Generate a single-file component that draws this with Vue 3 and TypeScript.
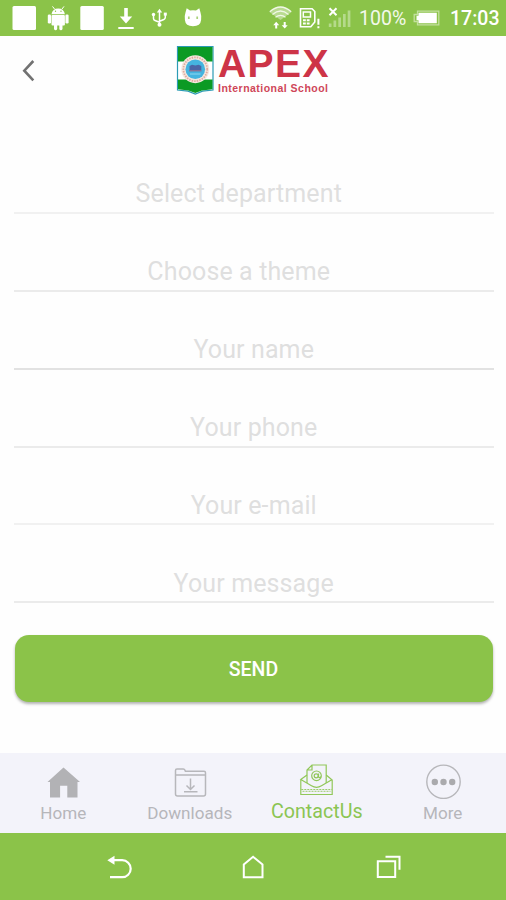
<script setup lang="ts">
interface Field {
  label: string
  kind: 'select' | 'input'
  tone: string
}

const fields: Field[] = [
  { label: 'Select department', kind: 'select', tone: 'soft' },
  { label: 'Choose a theme', kind: 'select', tone: 'mid' },
  { label: 'Your name', kind: 'input', tone: 'strong' },
  { label: 'Your phone', kind: 'input', tone: 'mid' },
  { label: 'Your e-mail', kind: 'input', tone: 'soft' },
  { label: 'Your message', kind: 'input', tone: 'mid' },
]

const tabs = [
  { id: 'home', label: 'Home' },
  { id: 'downloads', label: 'Downloads' },
  { id: 'contact', label: 'ContactUs' },
  { id: 'more', label: 'More' },
]
const activeTab = 'contact'
</script>

<template>
  <div class="screen">
    <header class="status">
      <svg class="status-left" width="210" height="36" viewBox="0 0 210 36" fill="#fff">
        <rect x="12.5" y="6" width="23.5" height="24" rx="1.5" />
        <g>
          <path d="M51.5 14.2a6.8 6.8 0 0 1 13.400 0z" />
          <path d="M54.500 9l-2-2.600M62 9l2-2.600" stroke="#fff" stroke-width="1" />
          <rect x="51.500" y="15" width="13.400" height="10.500" rx="1" />
          <rect x="47.800" y="14.500" width="3.200" height="9" rx="1.300" />
          <rect x="65.400" y="14.500" width="3.200" height="9" rx="1.300" />
          <rect x="54" y="24" width="3.200" height="6.200" rx="1.400" />
          <rect x="59.300" y="24" width="3.200" height="6.200" rx="1.400" />
          <circle cx="55.500" cy="11.200" r=".7" fill="#8bc349" />
          <circle cx="61" cy="11.200" r=".7" fill="#8bc349" />
        </g>
        <rect x="80.300" y="6" width="23.500" height="24" rx="1.500" />
        <path d="M124.200 8h3.600v8.500h4.400L126 23.600l-6.200-7.100h4.400zM118.300 27h15.400v2.100h-15.400z" />
        <path d="M159.500 11v13M153.500 15v3.500q0 1.500 1.500 2l4.500 1.800M165.300 14.500v2.800q0 1.500-1.500 2.200l-4.300 1.800" fill="none" stroke="#fff" stroke-width="1.500" />
        <path d="M156.800 12.500l2.700-3.700 2.700 3.700z" />
        <circle cx="153.500" cy="14.500" r="1.700" />
        <rect x="163.800" y="12.600" width="3" height="3" />
        <circle cx="159.500" cy="24.800" r="2" />
        <path d="M185.500 12.500l1.200-4.200 3.300 2.300q3-.7 6 0l3.300-2.300 1.200 4.200q1 2.500.6 7.500-.6 6.200-8.100 6.200t-8.100-6.200q-.4-5 .6-7.500z" />
        <path d="M188.800 16.500v2.500M197.200 16.500v2.500" stroke="#a9d178" stroke-width="1.700" />
      </svg>
      <div class="status-right">
        <svg width="88" height="36" viewBox="268 0 88 36">
          <path d="M269.500 12q11-10.500 22 0L280.500 20z" fill="#fff" opacity=".4" />
          <path d="M269.800 11.800q10.700-9.500 21.400 0M272.500 14.500q8-7 16 0M275.500 17.300q5-4 10 0" fill="none" stroke="#f1f8e7" stroke-width="1.300" />
          <path d="M276.200 21.800l3 3.400h-2v3.200H275.200v-3.200h-2zM284.700 28.600l-3-3.400h2V22h2v3.200h2z" fill="#fff" />
          <path d="M300.500 8.700h11.600l2.700 2.800v10.500l-4 4.800h-10.300z" fill="none" stroke="#fff" stroke-width="1.600" />
          <path d="M303.300 12h7.200v5h-7.200z" fill="none" stroke="#fff" stroke-width="1.500" />
          <path d="M303 20.300h7M303 23.500h7" stroke="#fff" stroke-width="2" stroke-dasharray="2.800 1" />
          <path d="M317.400 18.800h2v6h-2zM317.400 26.200h2v2h-2z" fill="#fff" />
          <path d="M329.500 8.200l7 7M336.500 8.200l-7 7" stroke="#fff" stroke-width="2" />
          <g fill="#b5da8b">
            <rect x="328.800" y="23.500" width="2.700" height="3.500" />
            <rect x="333.500" y="20.500" width="2.700" height="6.500" />
            <rect x="338.300" y="17.500" width="2.700" height="9.500" />
            <rect x="343" y="14" width="2.700" height="13" />
            <rect x="347.700" y="10.500" width="2.700" height="16.500" />
          </g>
        </svg>
        <span class="percent">100%</span>
        <svg class="battery" width="28" height="36" viewBox="412 0 28 36">
          <path d="M417.500 11.200h21.300v13.600h-21.300v-3.300h-3.300v-7h3.300z" fill="none" stroke="#c3e09f" stroke-width="1.300" />
          <path d="M418.500 12.700h18.300v10.600h-18.300v-3h-2v-4.600h2z" fill="#fff" />
        </svg>
        <span class="clock">17:03</span>
      </div>
    </header>

    <div class="header">
      <svg class="back" width="16" height="26" viewBox="0 0 16 26">
        <path d="M13.300 3L4.300 12.700l9 9.700" fill="none" stroke="#727272" stroke-width="2.600" />
      </svg>
      <svg class="logo" width="156" height="62" viewBox="175 36 156 62">
        <path d="M177.500 46.500h35.500v43.500l-10.500 1.200-7.200 2.800-7.300-2.800-10.500-1.200z" fill="#fff" stroke="#2b9bb5" stroke-width="1.200" />
        <path d="M178 47h34.500v14.500h-34.500z" fill="#0b9a24" />
        <path d="M178 79.500h34.500v9.800l-10.500 1.200-6.700 2.500-6.800-2.500-10.500-1.200z" fill="#0b9a24" />
        <circle cx="195.300" cy="69.200" r="14" fill="#f4e8df" />
        <circle cx="195.300" cy="69.200" r="11.900" fill="none" stroke="#e0aaa0" stroke-width="1.800" stroke-dasharray="1.500 1.100" />
        <circle cx="195.300" cy="69.200" r="9.800" fill="#45b4df" />
        <path d="M189.500 66l2.500-1.200 3.300.8 3.300-.8 2.700 1.200v4h-11.800z" fill="#4b65a5" />
        <path d="M189 70.800h12.500" stroke="#a55577" stroke-width="1" />
        <path d="M190 74h10.500" stroke="#7ed0ec" stroke-width="1.300" />
        <text x="218" y="76.500" textLength="110.500" class="brand">APEX</text>
        <text x="218" y="92" textLength="110" class="brand-sub">International School</text>
      </svg>
    </div>

    <main class="form">
      <div v-for="field in fields" :key="field.label" class="field" :class="[field.kind, field.tone]">
        <span class="placeholder">{{ field.label }}</span>
      </div>
      <button class="send" type="button">SEND</button>
    </main>

    <nav class="tabs">
      <div v-for="tab in tabs" :key="tab.id" class="tab" :class="{ active: tab.id === activeTab }">
        <svg v-if="tab.id === 'home'" width="36" height="36" viewBox="0 0 36 36">
          <path d="M18.500 4.500L35 19h-2.500v15.500H22.300V22.800h-7.200v11.700H5V19H2.500z" fill="#b2b2b5" />
        </svg>
        <svg v-else-if="tab.id === 'downloads'" width="36" height="36" viewBox="0 0 36 36" fill="none" stroke="#b7b7bb" stroke-width="1.500">
          <path d="M3.500 31V7.500Q3.500 6 5 6h6.300q1.200 0 1.700 1.200l.4 1H32Q33.500 8.200 33.500 9.700V31q0 2-2 2H5.500q-2 0-2-2zM3.500 12h30" />
          <path d="M18.500 15.500v11M14.500 22.500l4 4 4-4M12 28.700h13.500" />
        </svg>
        <svg v-else-if="tab.id === 'contact'" width="36" height="36" viewBox="0 0 36 36" fill="none" stroke="#91c759" stroke-width="1.200">
          <path d="M2.800 18v14.500h31.400V18L28.200 13M9 13L2.800 17.500 13.500 23.800q5 3 10 0l10.700-6.300" />
          <path d="M9 21V8l5-5h14.200v18M9 8h5V3" />
          <path d="M3.300 27.500h30.500M4.500 29.300h28" stroke-width=".9" stroke-dasharray="2 1" />
          <circle cx="18.500" cy="13.800" r="4.800" />
          <circle cx="18.200" cy="13.800" r="2" />
          <path d="M20.500 11.500v3.500q1.500 1.500 2.500-.5" />
        </svg>
        <svg v-else width="36" height="36" viewBox="0 0 36 36">
          <circle cx="18.500" cy="18.800" r="16.700" fill="none" stroke="#b7b7bb" stroke-width="1.400" />
          <g fill="#aaaaad">
            <circle cx="9.800" cy="19" r="3.200" />
            <circle cx="18.500" cy="19" r="3.200" />
            <circle cx="27.200" cy="19" r="3.200" />
          </g>
        </svg>
        <span class="tab-label">{{ tab.label }}</span>
      </div>
    </nav>

    <footer class="system">
      <svg width="28" height="28" viewBox="105 854 28 28">
        <path d="M113.500 860.200h8.700a8.500 8.500 0 0 1 0 17h-12.200" fill="none" stroke="#fff" stroke-width="2.200" />
        <path d="M107.300 860.200l7.200-4.500v9z" fill="#fff" />
      </svg>
      <svg width="28" height="28" viewBox="239.500 854 28 28">
        <path d="M244.300 877.200v-12.700l9.300-7.700 9.400 7.700v12.700z" fill="none" stroke="#fff" stroke-width="2" />
      </svg>
      <svg width="28" height="28" viewBox="374 854 28 28" fill="none" stroke="#fff" stroke-width="2">
        <path d="M377.800 861.300h17.400v15.700h-17.400z" />
        <path d="M385.500 856.800h14v13" />
      </svg>
    </footer>
  </div>
</template>

<style>
body {
  background: #fefefe;
}
</style>

<style scoped>
.screen {
  display: flex;
  flex-direction: column;
  width: 506px;
  height: 900px;
  overflow: hidden;
  background: #fefefe;
  font-family: Roboto, "Liberation Sans", sans-serif;
}
.status {
  display: flex;
  justify-content: space-between;
  flex: none;
  height: 35.600px;
  background: #8bc349;
  color: #fff;
}
.status-right {
  display: flex;
  padding-right: 7px;
  line-height: 38px;
  white-space: nowrap;
}
.percent {
  width: 50px;
  margin-left: 3px;
  font-size: 19.500px;
  color: #f3f9eb;
}
.battery {
  margin-left: 3px;
}
.clock {
  width: 49px;
  margin-left: 10px;
  font-size: 19.500px;
  font-weight: 500;
}
.header {
  display: flex;
  align-items: flex-start;
  flex: none;
  height: 100.400px;
}
.back {
  margin: 22px 0 0 20px;
}
.logo {
  margin: 0.400px 0 0 139px;
  overflow: visible;
}
.brand {
  font: bold 39px "Liberation Sans", sans-serif;
  fill: #cd3447;
}
.brand-sub {
  font: bold 10.500px "Liberation Sans", sans-serif;
  fill: #cf4658;
}
.form {
  display: flex;
  flex-direction: column;
  flex: 1;
  padding: 0 12px 0 13.500px;
}
.field {
  display: flex;
  align-items: flex-end;
  justify-content: center;
  box-sizing: border-box;
  height: 77.900px;
  padding-bottom: 2.600px;
  border-bottom: 2px solid #ebebeb;
}
.field.soft {
  border-color: #f1f1f1;
}
.field.strong {
  border-color: #e2e2e2;
}
.field.select {
  padding-right: 30px;
}
.placeholder {
  font-size: 25px;
  line-height: 30px;
  letter-spacing: 0.120px;
  color: #dfdfdf;
}
.send {
  height: 67px;
  margin: 32px 1.500px 0 1px;
  border: 0;
  border-radius: 14px;
  background: #8bc349;
  box-shadow: 0 2px 3px rgba(0, 0, 0, 0.3);
  color: #fff;
  font: 500 19.500px/67px Roboto, sans-serif;
  padding: 1px 0 0;
}
.tabs {
  display: grid;
  grid-template-columns: repeat(4, 1fr);
  flex: none;
  height: 80.300px;
  background: #f3f3fa;
}
.tab {
  display: flex;
  flex-direction: column;
  align-items: center;
  padding-top: 10px;
}
.tab-label {
  margin-top: 3px;
  font-size: 17.100px;
  line-height: 22px;
  color: #b6b6ba;
}
.active {
  padding-top: 9px;
}
.active .tab-label {
  padding-left: 1px;
  font-size: 19.700px;
  color: #8bc553;
}
.system {
  display: flex;
  justify-content: center;
  gap: 106.500px;
  flex: none;
  height: 46px;
  padding-top: 20.900px;
  background: #8bc349;
}
</style>
